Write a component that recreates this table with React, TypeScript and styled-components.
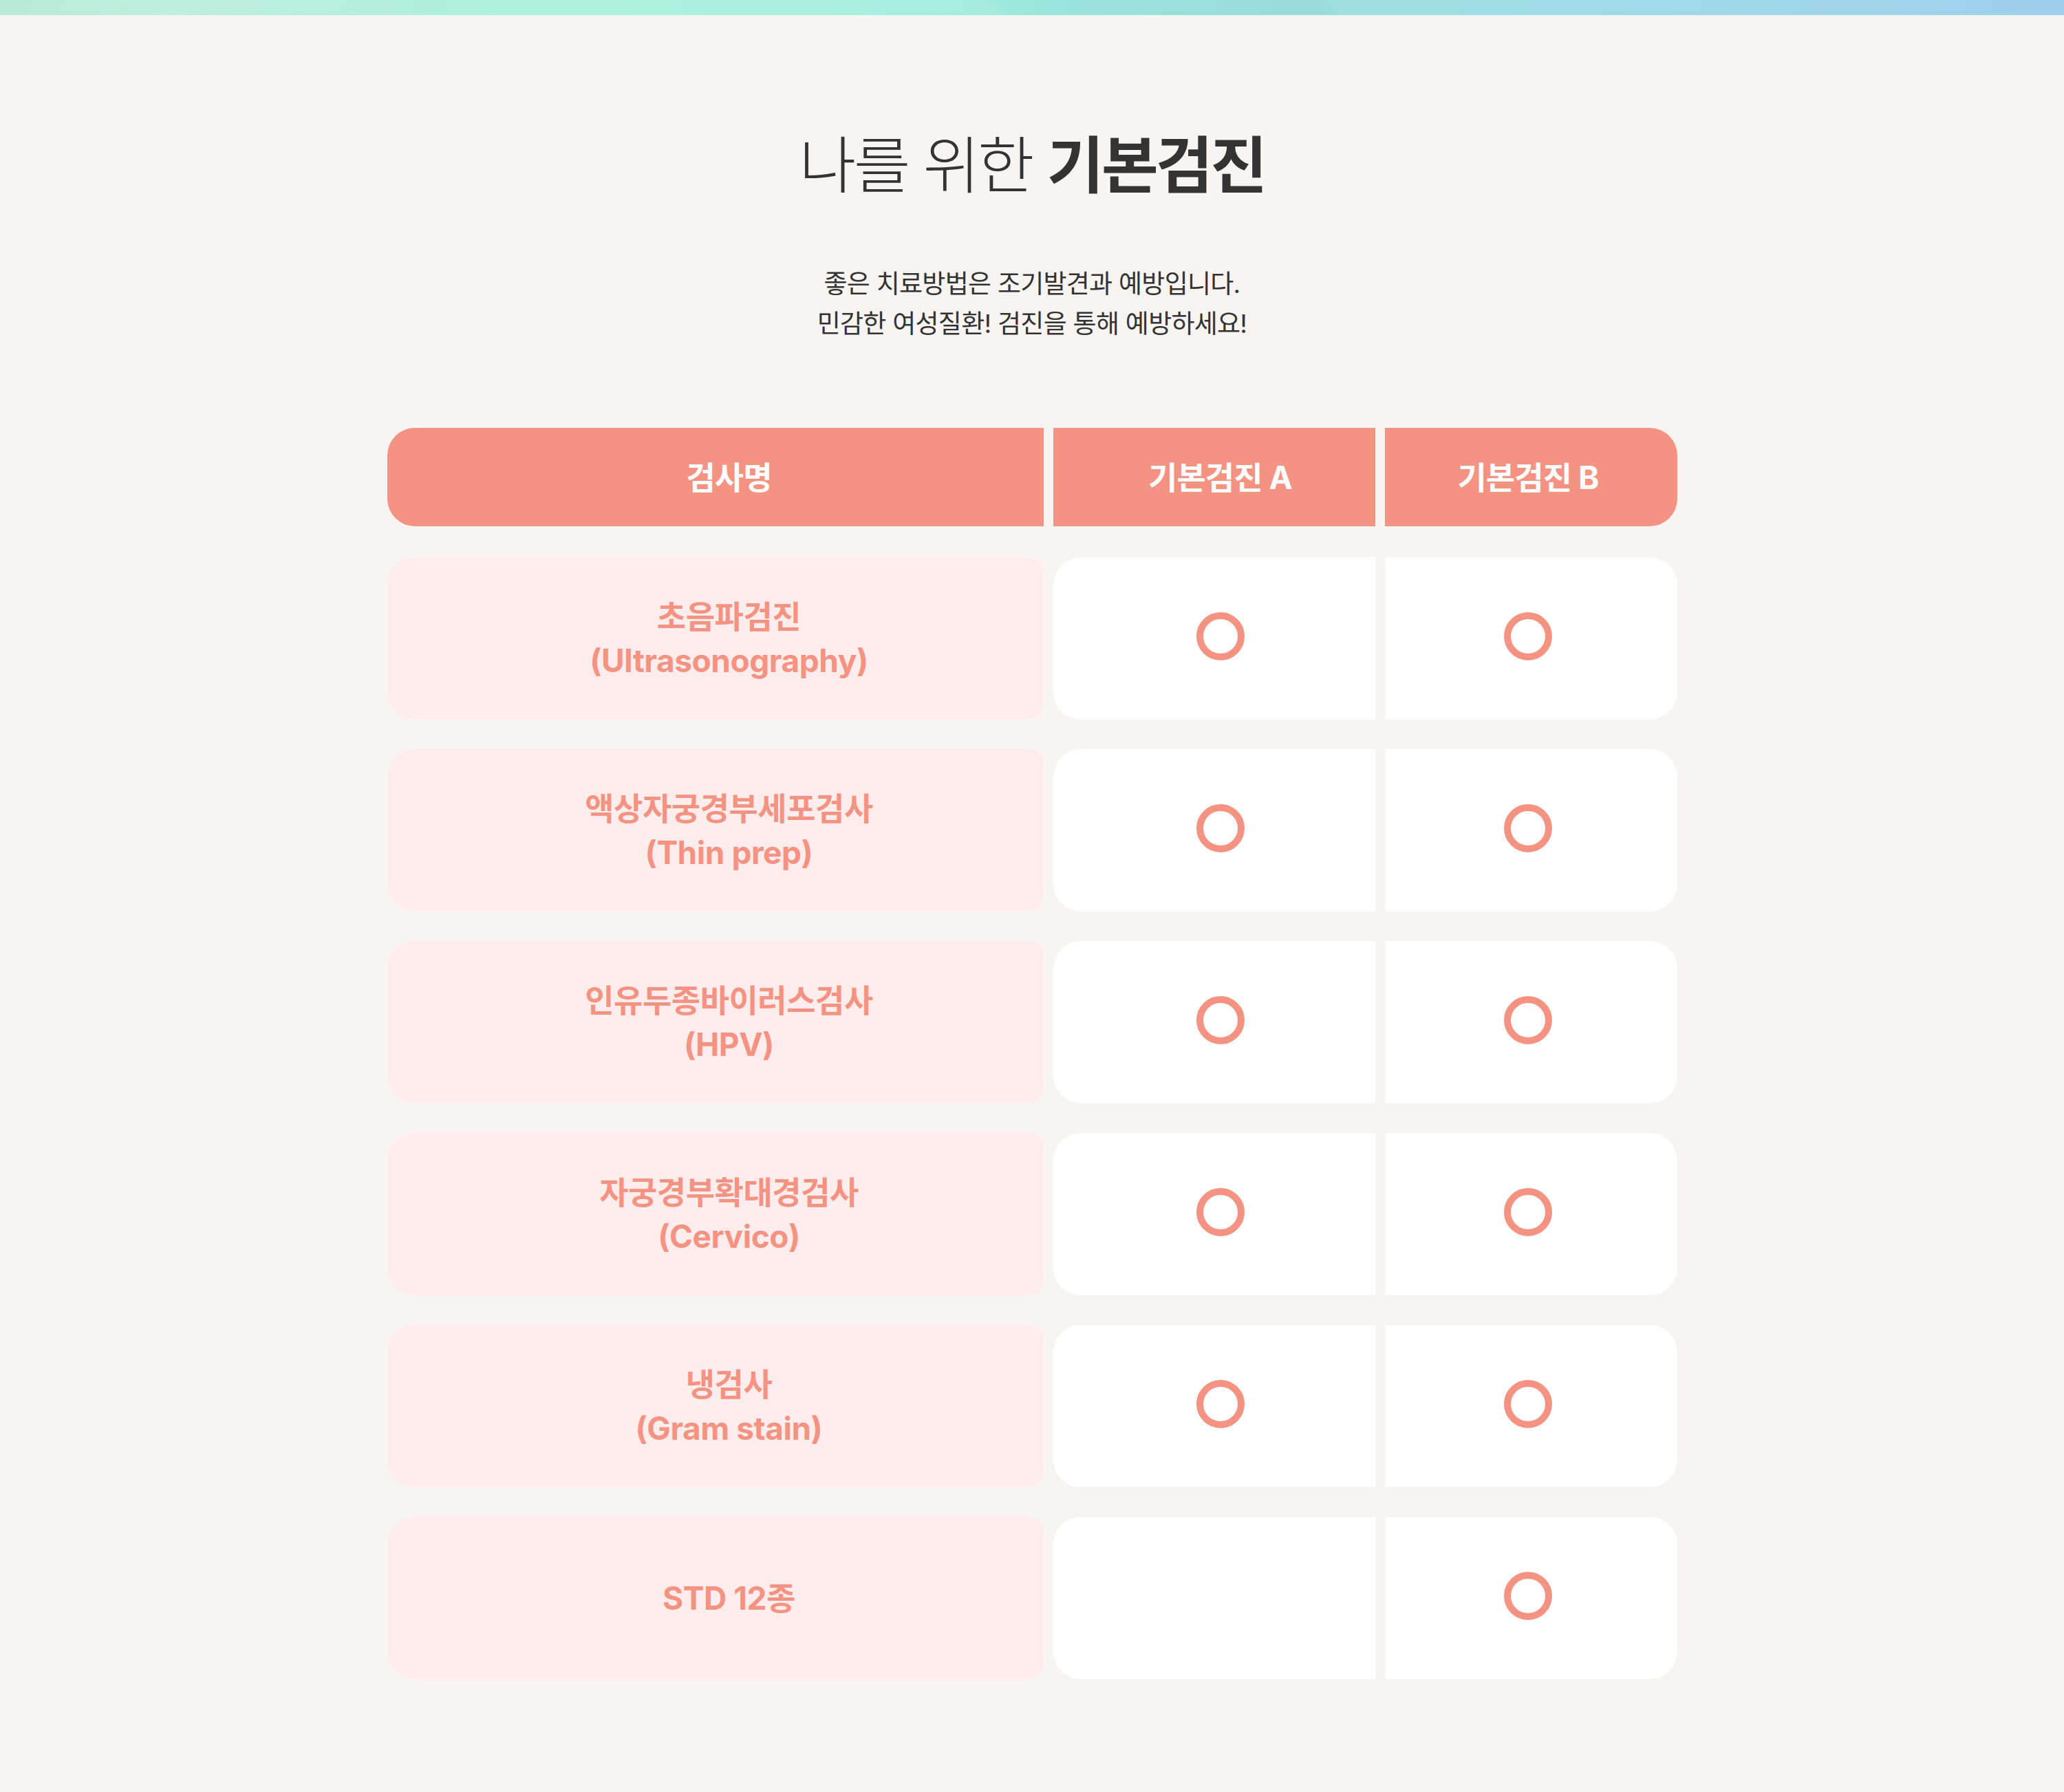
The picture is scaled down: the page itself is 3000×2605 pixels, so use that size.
import React from 'react';
import styled, { createGlobalStyle } from 'styled-components';

const colors = {
  page: '#f7f4f1',
  ink: '#333333',
  salmon: '#f59383',
  blush: '#ffeded',
  white: '#ffffff',
};

const GlobalStyle = createGlobalStyle`
  html, body {
    margin: 0;
    padding: 0;
    background: ${colors.page};
  }
  body {
    font-family: Inter, "Noto Sans CJK KR", "Noto Sans", sans-serif;
    color: ${colors.ink};
  }
`;

const Page = styled.div`
  min-height: 2605px;
  background: ${colors.page};
`;

const TopBar = styled.div`
  height: 22px;
  background:
    linear-gradient(115deg, rgba(255, 255, 255, 0) 0%, rgba(255, 255, 255, 0.12) 8%, rgba(255, 255, 255, 0) 20%),
    linear-gradient(60deg, rgba(0, 0, 0, 0) 48%, rgba(60, 170, 170, 0.08) 49%, rgba(60, 170, 170, 0.08) 64%, rgba(0, 0, 0, 0) 65%),
    linear-gradient(90deg, #b8ebd8 0%, #aef1df 30%, #a6efe0 45%, #a0e2de 60%, #a1dce6 75%, #9fd0ee 100%);
`;

const Section = styled.section`
  display: flex;
  flex-direction: column;
  align-items: center;
  padding-top: 165px;
`;

const Title = styled.h2`
  margin: 0;
  font-size: 90px;
  line-height: 1.2;
  font-weight: 300;
  letter-spacing: -0.04em;
  color: ${colors.ink};

  strong {
    font-weight: 700;
  }
`;

const Lead = styled.p`
  margin: 89px 0 0;
  font-size: 37px;
  line-height: 58px;
  font-weight: 400;
  letter-spacing: -0.02em;
  text-align: center;
  color: ${colors.ink};
`;

const Table = styled.div`
  margin-top: 122px;
  width: 1875px;
  display: flex;
  flex-direction: column;
  gap: 43px;
`;

const Row = styled.div<{ $head?: boolean }>`
  display: grid;
  grid-template-columns: 954px 468px 425px;
  column-gap: 14px;
  height: ${(p) => (p.$head ? 143 : 236)}px;
  margin-bottom: ${(p) => (p.$head ? 2 : 0)}px;
`;

type Pos = 'first' | 'mid' | 'last';

// column content is not quite centred in the reference; shift per column
const shifts: Record<Pos, number> = { first: 40, mid: 18, last: -8 };

const Cell = styled.div<{ $shift: number }>`
  display: flex;
  align-items: center;
  justify-content: center;
  padding-left: ${(p) => Math.max(p.$shift, 0)}px;
  padding-right: ${(p) => Math.max(-p.$shift, 0)}px;
`;

const HeadCell = styled(Cell)<{ $pos: Pos }>`
  background: ${colors.salmon};
  border-radius: ${(p) =>
    p.$pos === 'first' ? '40px 0 0 40px' : p.$pos === 'last' ? '0 40px 40px 0' : '0'};
  color: ${colors.white};
  font-size: 46px;
  font-weight: 700;
  letter-spacing: -0.02em;
  padding-bottom: 6px;
`;

const NameCell = styled(Cell)`
  background: ${colors.blush};
  border-radius: 40px 22px 22px 40px;
  color: ${colors.salmon};
  font-size: 46px;
  line-height: 64px;
  font-weight: 700;
  letter-spacing: -0.01em;
  text-align: center;
`;

const MarkCell = styled(Cell)<{ $side: 'left' | 'right' }>`
  background: ${colors.white};
  border-radius: ${(p) => (p.$side === 'left' ? '40px 0 0 40px' : '0 40px 40px 0')};
  padding-bottom: 6px;
`;

const Ring = styled.span`
  display: block;
  width: 50px;
  height: 50px;
  border: 10px solid ${colors.salmon};
  border-radius: 50%;
`;

const exams = [
  { ko: '초음파검진', en: '(Ultrasonography)', a: true, b: true },
  { ko: '액상자궁경부세포검사', en: '(Thin prep)', a: true, b: true },
  { ko: '인유두종바이러스검사', en: '(HPV)', a: true, b: true },
  { ko: '자궁경부확대경검사', en: '(Cervico)', a: true, b: true },
  { ko: '냉검사', en: '(Gram stain)', a: true, b: true },
  { ko: 'STD 12종', en: '', a: false, b: true },
];

export default function App() {
  return (
    <Page>
      <GlobalStyle />
      <TopBar />
      <Section>
        <Title>
          나를 위한 <strong>기본검진</strong>
        </Title>
        <Lead>
          좋은 치료방법은 조기발견과 예방입니다.
          <br />
          민감한 여성질환! 검진을 통해 예방하세요!
        </Lead>
        <Table>
          <Row $head>
            <HeadCell $pos="first" $shift={shifts.first}>검사명</HeadCell>
            <HeadCell $pos="mid" $shift={shifts.mid}>기본검진 A</HeadCell>
            <HeadCell $pos="last" $shift={shifts.last}>기본검진 B</HeadCell>
          </Row>
          {exams.map((exam) => (
            <Row key={exam.ko}>
              <NameCell $shift={shifts.first}>
                <div>
                  {exam.ko}
                  {exam.en && (
                    <>
                      <br />
                      {exam.en}
                    </>
                  )}
                </div>
              </NameCell>
              <MarkCell $side="left" $shift={shifts.mid}>
                {exam.a && <Ring />}
              </MarkCell>
              <MarkCell $side="right" $shift={shifts.last}>
                {exam.b && <Ring />}
              </MarkCell>
            </Row>
          ))}
        </Table>
      </Section>
    </Page>
  );
}
